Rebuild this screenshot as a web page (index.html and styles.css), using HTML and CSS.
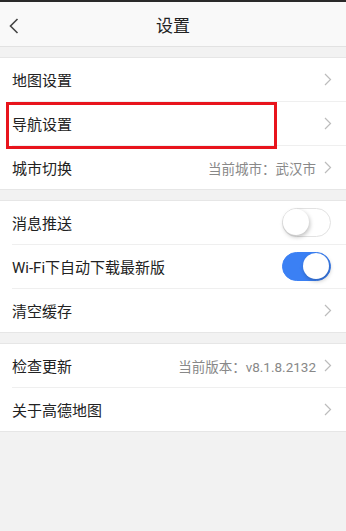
FILE: index.html
```html
<!DOCTYPE html>
<html lang="zh-CN">
<head>
  <meta charset="UTF-8" />
  <meta name="viewport" content="width=device-width, initial-scale=1.0"/>
  <title>设置</title>
  <link rel="stylesheet" href="styles.css">
</head>
<body>

  <div class="status-line"></div>

  <header class="nav-bar">
    <span class="back">
      <svg width="10" height="16" viewBox="0 0 10 16"><path d="M8.5 1 L1.5 8 L8.5 15" fill="none" stroke="#444" stroke-width="1.6"/></svg>
    </span>
    <span class="title">设置</span>
  </header>

  <div class="group">
    <div class="row">
      <span class="label">地图设置</span>
      <span class="arrow"><svg width="8" height="13" viewBox="0 0 8 13"><path d="M1 1 L6.5 6.5 L1 12" fill="none" stroke="#bcbcbc" stroke-width="1.2"/></svg></span>
    </div>
    <div class="row">
      <span class="label">导航设置</span>
      <span class="arrow"><svg width="8" height="13" viewBox="0 0 8 13"><path d="M1 1 L6.5 6.5 L1 12" fill="none" stroke="#bcbcbc" stroke-width="1.2"/></svg></span>
      <div class="highlight"></div>
    </div>
    <div class="row">
      <span class="label">城市切换</span>
      <span class="value">当前城市：武汉市</span>
      <span class="arrow"><svg width="8" height="13" viewBox="0 0 8 13"><path d="M1 1 L6.5 6.5 L1 12" fill="none" stroke="#bcbcbc" stroke-width="1.2"/></svg></span>
    </div>
  </div>

  <div class="group">
    <div class="row">
      <span class="label">消息推送</span>
      <span class="switch"><span class="knob"></span></span>
    </div>
    <div class="row">
      <span class="label">Wi-Fi下自动下载最新版</span>
      <span class="switch on"><span class="knob"></span></span>
    </div>
    <div class="row">
      <span class="label">清空缓存</span>
      <span class="arrow"><svg width="8" height="13" viewBox="0 0 8 13"><path d="M1 1 L6.5 6.5 L1 12" fill="none" stroke="#bcbcbc" stroke-width="1.2"/></svg></span>
    </div>
  </div>

  <div class="group">
    <div class="row">
      <span class="label">检查更新</span>
      <span class="value">当前版本：v8.1.8.2132</span>
      <span class="arrow"><svg width="8" height="13" viewBox="0 0 8 13"><path d="M1 1 L6.5 6.5 L1 12" fill="none" stroke="#bcbcbc" stroke-width="1.2"/></svg></span>
    </div>
    <div class="row">
      <span class="label">关于高德地图</span>
      <span class="arrow"><svg width="8" height="13" viewBox="0 0 8 13"><path d="M1 1 L6.5 6.5 L1 12" fill="none" stroke="#bcbcbc" stroke-width="1.2"/></svg></span>
    </div>
  </div>

</body>
</html>
```

FILE: styles.css
```css
* { box-sizing: border-box; }

body {
  margin: 0;
  font-family: Roboto, "Noto Sans CJK SC", sans-serif;
  background-color: #f2f2f2;
  color: #222;
}

.status-line {
  height: 2px;
  background: #2a2a2a;
}

.nav-bar {
  height: 45px;
  background: #f9f9f9;
  border-bottom: 1px solid #e2e2e2;
  display: flex;
  align-items: center;
  justify-content: center;
  position: relative;
}

.nav-bar .back {
  position: absolute;
  left: 9px;
  top: 16px;
  display: flex;
}

.nav-bar .title {
  font-size: 17px;
  color: #222;
}

.group {
  margin-top: 10px;
  background: #fff;
  border-top: 1px solid #e6e6e6;
  border-bottom: 1px solid #e6e6e6;
}

.row {
  height: 43px;
  display: flex;
  align-items: center;
  padding: 0 14px 0 12px;
  position: relative;
}

.row + .row {
  height: 44px;
  border-top: 1px solid #fff;
}

/* inset divider */
.row + .row::before {
  content: "";
  position: absolute;
  left: 12px;
  right: 0;
  top: -1px;
  height: 1px;
  background: #efefef;
}

.row .label {
  flex: 1;
  font-size: 15px;
}

.row .value {
  font-size: 13.5px;
  color: #888;
  margin-right: 8px;
}

.row .arrow {
  display: flex;
}

.switch {
  width: 49px;
  height: 29px;
  border-radius: 15px;
  background: #fff;
  border: 1.5px solid #e2e2e2;
  position: relative;
  margin-right: 1px;
}

.switch .knob {
  position: absolute;
  top: 0;
  left: 0;
  width: 26px;
  height: 26px;
  border-radius: 50%;
  background: #fff;
  box-shadow: 1px 2px 4px rgba(0, 0, 0, 0.25);
}

.switch.on {
  background: #3b80f4;
  border-color: #3b80f4;
}

.switch.on .knob {
  left: 20px;
}

.highlight {
  position: absolute;
  left: 6px;
  top: 0;
  width: 271px;
  height: 47px;
  border: 3px solid #e8141c;
  z-index: 1;
}
```
